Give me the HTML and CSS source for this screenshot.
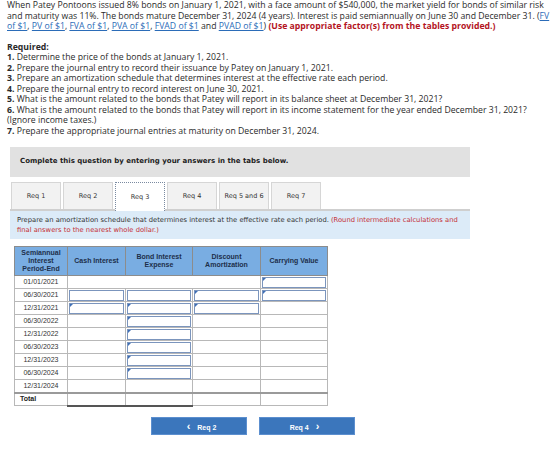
FILE: index.html
```html
<!DOCTYPE html>
<html lang="en">
<head>
    <meta charset="UTF-8">
    <title>Patey Pontoons - Bonds</title>
    <link rel="stylesheet" href="styles.css">
</head>
<body>

    <div class="question">
        <p>When Patey Pontoons issued 8% bonds on January 1, 2021, with a face amount of $540,000, the market yield for bonds of similar risk<br>
        and maturity was 11%. The bonds mature December 31, 2024 (4 years). Interest is paid semiannually on June 30 and December 31. (<a href="#">FV<br>
        of $1</a>, <a href="#">PV of $1</a>, <a href="#">FVA of $1</a>, <a href="#">PVA of $1</a>, <a href="#">FVAD of $1</a> and <a href="#">PVAD of $1</a>) <span class="warn">(Use appropriate factor(s) from the tables provided.)</span></p>

        <p class="required">Required:</p>
        <p><b>1.</b> Determine the price of the bonds at January 1, 2021.<br>
        <b>2.</b> Prepare the journal entry to record their issuance by Patey on January 1, 2021.<br>
        <b>3.</b> Prepare an amortization schedule that determines interest at the effective rate each period.<br>
        <b>4.</b> Prepare the journal entry to record interest on June 30, 2021.<br>
        <b>5.</b> What is the amount related to the bonds that Patey will report in its balance sheet at December 31, 2021?<br>
        <b>6.</b> What is the amount related to the bonds that Patey will report in its income statement for the year ended December 31, 2021?<br>
        (Ignore income taxes.)<br>
        <b>7.</b> Prepare the appropriate journal entries at maturity on December 31, 2024.</p>
    </div>

    <div class="work">
        <div class="intro">Complete this question by entering your answers in the tabs below.</div>

        <div class="tabs">
            <div class="tab">Req 1</div>
            <div class="tab">Req 2</div>
            <div class="tab active">Req 3</div>
            <div class="tab">Req 4</div>
            <div class="tab">Req 5 and 6</div>
            <div class="tab">Req 7</div>
        </div>

        <div class="instructions">
            Prepare an amortization schedule that determines interest at the effective rate each period. <span class="hint">(Round intermediate calculations and final answers to the nearest whole dollar.)</span>
        </div>

        <table class="schedule">
            <tr>
                <th class="c-date">Semiannual Interest Period-End</th>
                <th class="c-cash">Cash Interest</th>
                <th class="c-exp">Bond Interest Expense</th>
                <th class="c-amort">Discount Amortization</th>
                <th class="c-carry">Carrying Value</th>
            </tr>
            <tr>
                <td class="date">01/01/2021</td>
                <td colspan="3" class="blank"></td>
                <td><div class="input flag"></div></td>
            </tr>
            <tr>
                <td class="date">06/30/2021</td>
                <td><div class="input"></div></td>
                <td><div class="input"></div></td>
                <td><div class="input flag"></div></td>
                <td><div class="input flag"></div></td>
            </tr>
            <tr>
                <td class="date">12/31/2021</td>
                <td><div class="input flag"></div></td>
                <td><div class="input flag"></div></td>
                <td><div class="input flag"></div></td>
                <td></td>
            </tr>
            <tr>
                <td class="date">06/30/2022</td>
                <td></td>
                <td><div class="input flag"></div></td>
                <td></td>
                <td></td>
            </tr>
            <tr>
                <td class="date">12/31/2022</td>
                <td></td>
                <td><div class="input flag"></div></td>
                <td></td>
                <td></td>
            </tr>
            <tr>
                <td class="date">06/30/2023</td>
                <td></td>
                <td><div class="input flag"></div></td>
                <td></td>
                <td></td>
            </tr>
            <tr>
                <td class="date">12/31/2023</td>
                <td></td>
                <td><div class="input flag"></div></td>
                <td></td>
                <td></td>
            </tr>
            <tr>
                <td class="date">06/30/2024</td>
                <td></td>
                <td><div class="input flag"></div></td>
                <td></td>
                <td></td>
            </tr>
            <tr>
                <td class="date">12/31/2024</td>
                <td></td>
                <td></td>
                <td></td>
                <td></td>
            </tr>
            <tr class="total">
                <td class="label">Total</td>
                <td class="sum"></td>
                <td class="sum"></td>
                <td></td>
                <td></td>
            </tr>
        </table>

        <div class="nav">
            <button class="nav-btn"><span class="chev">&lsaquo;</span> Req 2</button>
            <button class="nav-btn">Req 4 <span class="chev">&rsaquo;</span></button>
        </div>
    </div>

</body>
</html>
```

FILE: styles.css
```css
* { box-sizing: border-box; margin: 0; padding: 0; }
body {
    background: white;
    color: #2a2a2a;
    font-family: "Open Sans", "Liberation Sans", sans-serif;
    font-size: 8.7px;
    line-height: 10.5px;
}
.question {
    padding: 0 0 0 7px;
    white-space: nowrap;
}
.question p {
    margin-bottom: 10px;
}
.question a {
    color: #2b6cb8;
    text-decoration: underline;
}
.warn {
    color: #b4141e;
    font-weight: bold;
}
.required {
    font-weight: bold;
    margin-bottom: 0 !important;
    margin-top: 0;
}
.work {
    width: 460px;
    margin: 11px 0 0 10px;
    font-family: "DejaVu Sans", Verdana, sans-serif;
}
.intro {
    background: #e1e1e1;
    height: 30px;
    padding: 8px 10px;
    font-size: 7px;
    line-height: 12px;
    font-weight: bold;
    color: #222;
}
.tabs {
    display: flex;
    gap: 2px;
    margin-top: 5px;
    padding-left: 1px;
    border-bottom: 2px solid #cfcfcf;
}
.tab {
    width: 50px;
    height: 27px;
    background: #f2f2f2;
    border: 1px solid #d6d6d6;
    border-bottom: none;
    font-size: 6.5px;
    color: #333;
    display: flex;
    align-items: center;
    justify-content: center;
}
.tab.active {
    background: white;
    border: 1px dotted #7a8aa0;
    border-bottom: none;
    margin-bottom: -2px;
    height: 29px;
}
.instructions {
    background: #dcebf8;
    padding: 5px 7px 4px 7px;
    font-size: 6.75px;
    line-height: 9.5px;
    color: #333;
}
.hint {
    color: #c42f35;
}
.schedule {
    border-collapse: collapse;
    margin: 7px 0 0 4px;
    font-family: "Liberation Sans", Arial, sans-serif;
    font-size: 7px;
    color: #333;
}
.schedule th {
    background: #79ade2;
    color: #1d2f4a;
    font-weight: bold;
    border: 1px solid #8c8c8c;
    height: 29px;
    line-height: 8px;
    padding: 0 3px;
}
.c-date { width: 53px; }
.c-cash { width: 58px; }
.c-exp { width: 67px; }
.c-amort { width: 68px; }
.c-carry { width: 67px; }
.schedule td {
    border: 1px solid #b8b8b8;
    height: 13px;
    padding: 0 1px;
}
.schedule td.date {
    text-align: center;
    color: #333;
}
.input {
    position: relative;
    height: 11px;
    border: 1px solid #7b95bd;
    background: white;
}
/* little marker on cells that need an answer */
.input.flag::before {
    content: "";
    position: absolute;
    left: 0;
    top: 0;
    border-top: 3px solid #3f6fb5;
    border-right: 3px solid transparent;
}
.total td {
    border-top: 2px solid #9a9a9a;
}
.total td.label {
    font-weight: bold;
    padding-left: 5px;
    color: #222;
}
.total td.sum {
    border-bottom: 2px solid #555;
}
.nav {
    display: flex;
    gap: 12px;
    margin: 10px 0 0 141px;
}
.nav-btn {
    width: 96px;
    height: 18px;
    background: #3b76bc;
    border: 1px solid #5c8fcf;
    color: white;
    font-family: "Liberation Sans", Arial, sans-serif;
    font-size: 7px;
    font-weight: bold;
}
.chev {
    font-size: 11px;
    font-weight: bold;
    margin: 0 5px;
}
```
